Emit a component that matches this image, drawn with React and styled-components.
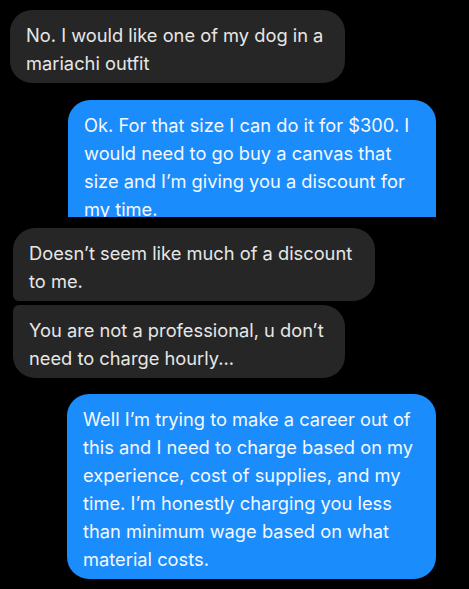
import React from "react";
import styled, { createGlobalStyle } from "styled-components";

const Global = createGlobalStyle`
  html, body { margin: 0; padding: 0; background: #000; }
  body { font-family: Inter, "Noto Sans", sans-serif; -webkit-font-smoothing: antialiased; }
`;

const Thread = styled.div`
  display: flex;
  flex-direction: column;
  background: #000;
  width: 469px;
  height: 589px;
  overflow: hidden;
  padding-top: 10px;
  box-sizing: border-box;
`;

const Bubble = styled.div`
  box-sizing: border-box;
  width: ${(p) => p.$w}px;
  margin-left: ${(p) => p.$x}px;
  margin-top: ${(p) => p.$gap || 0}px;
  ${(p) => (p.$h ? `height: ${p.$h}px; overflow: hidden;` : "")}
  padding: 11px 16px 6px 16px;
  font-size: 18.3px;
  line-height: 28px;
  color: ${(p) => (p.$me ? "#f4f8ff" : "#e6e6e6")};
  background: ${(p) => (p.$me ? "#1b8cfb" : "#262626")};
  border-radius: ${(p) => p.$r || "22px"};
`;

export default function App() {
  return (
    <>
      <Global />
      <Thread>
        <Bubble $x={10} $w={335}>
          No. I would like one of my dog in a mariachi outfit
        </Bubble>
        <Bubble $me $x={68} $w={368} $gap={17} $h={117} $r="22px 22px 0 0">
          Ok. For that size I can do it for $300. I would need to go buy a canvas that size and I’m giving you a discount for my time.
        </Bubble>
        <Bubble $x={13} $w={362} $gap={11} $r="22px 22px 22px 6px">
          Doesn’t seem like much of a discount to me.
        </Bubble>
        <Bubble $x={13} $w={332} $gap={4} $r="6px 22px 22px 22px">
          You are not a professional, u don’t need to charge hourly...
        </Bubble>
        <Bubble $me $x={67} $w={369} $gap={16}>
          Well I’m trying to make a career out of this and I need to charge based on my experience, cost of supplies, and my time. I’m honestly charging you less than minimum wage based on what material costs.
        </Bubble>
      </Thread>
    </>
  );
}
